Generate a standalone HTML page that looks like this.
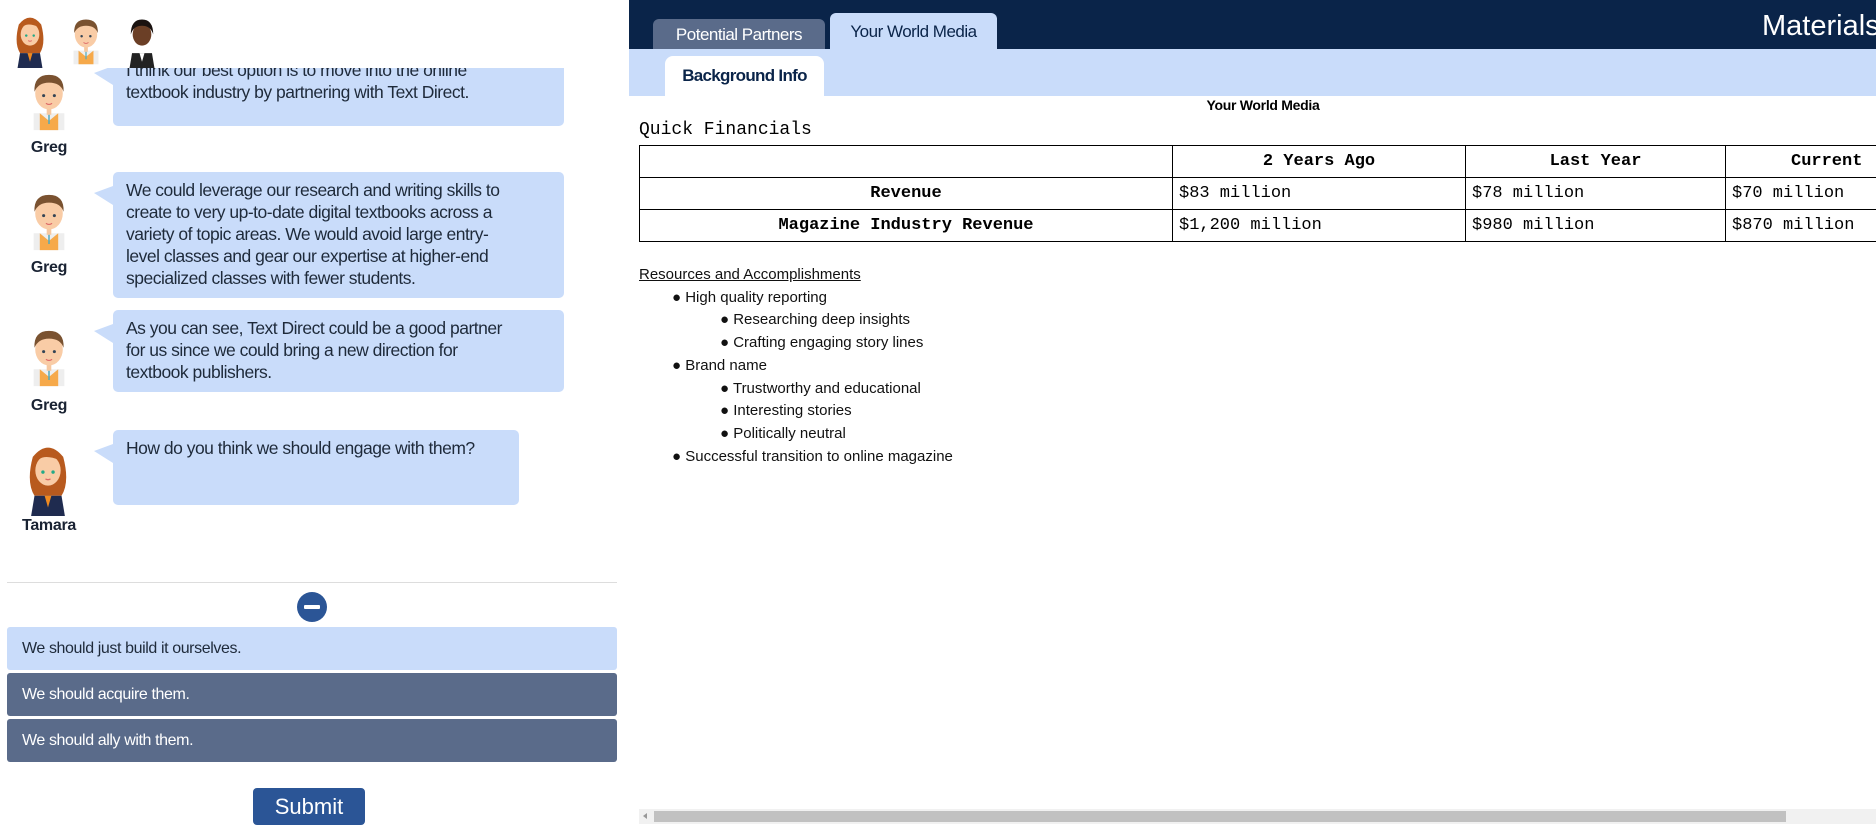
<!DOCTYPE html>
<html><head><meta charset="utf-8"><style>
*{margin:0;padding:0;box-sizing:border-box}
body{width:1876px;height:829px;overflow:hidden;background:#fff;font-family:"Liberation Sans",sans-serif;position:relative}
.a{position:absolute}
.bub{position:absolute;background:#c9dcfa;border-radius:5px;color:#1e2a3a;font-size:17.5px;line-height:22px;padding:7px 13px;letter-spacing:-0.5px;white-space:nowrap}
.bub:before{content:"";position:absolute;left:-19px;top:14px;border-right:19px solid #c9dcfa;border-top:7px solid transparent;border-bottom:12px solid transparent}
.name{position:absolute;font-weight:bold;font-size:16px;color:#1a2333;width:70px;text-align:center;letter-spacing:-0.3px}
.opt{position:absolute;left:7px;width:610px;height:43px;border-radius:3px;font-size:16px;line-height:43px;padding-left:15px;letter-spacing:-0.4px}
.mono{font-family:"Liberation Mono",monospace}
table{border-collapse:collapse}
td{border:1px solid #000;height:32px;font-family:"Liberation Mono",monospace;font-size:17px;padding:0 6px}
.li{position:absolute;font-size:15px;color:#111}
</style></head><body>
<svg width="0" height="0" style="position:absolute"><defs>
<g id="greg"><rect x="10" y="62" width="40" height="22" fill="#eee"/><path d="M18 62 L30 72 L42 62 L42 84 L18 84Z" fill="#f6a94a"/><rect x="27" y="54" width="6" height="10" fill="#f6c8a0"/><ellipse cx="30" cy="36" rx="18" ry="21" fill="#f9cca6"/><path d="M11 34 Q10 12 30 12 Q50 12 49 34 Q45 22 30 22 Q16 22 11 34Z" fill="#7a5230"/><circle cx="23" cy="39" r="2" fill="#345"/><circle cx="37" cy="39" r="2" fill="#345"/><path d="M26 49 Q30 52 34 49" stroke="#d66" stroke-width="1.5" fill="none"/><path d="M29 64 L31 64 L31 76 L29 76Z" fill="#5ab"/></g>
<g id="tam"><path d="M12 20 Q30 -2 48 20 Q56 50 46 66 L14 66 Q4 50 12 20Z" fill="#b85a1e"/><path d="M10 90 L14 66 L46 66 L50 90Z" fill="#1f2b4f"/><path d="M26 66 L30 80 L34 66Z" fill="#f08a20"/><ellipse cx="30" cy="36" rx="15" ry="18" fill="#f9cca6"/><path d="M15 30 Q20 14 44 24 Q40 18 30 17 Q18 18 15 30Z" fill="#b85a1e"/><circle cx="24" cy="38" r="2" fill="#2a8"/><circle cx="36" cy="38" r="2" fill="#2a8"/><path d="M27 46 Q30 48 33 46" stroke="#d66" stroke-width="1.5" fill="none"/></g>
<g id="wom"><path d="M10 90 L14 66 L46 66 L50 90Z" fill="#222"/><path d="M26 66 L30 80 L34 66Z" fill="#fff"/><ellipse cx="30" cy="36" rx="15" ry="18" fill="#6b3f26"/><path d="M12 36 Q12 12 30 12 Q48 12 48 36 Q44 22 30 22 Q16 22 12 36Z" fill="#1a1210"/></g>
</defs></svg>
<svg class="a" style="left:10px;top:12px" width="40" height="56" viewBox="0 0 60 90"><use href="#tam"/></svg>
<svg class="a" style="left:66px;top:12px" width="40" height="56" viewBox="0 0 60 90"><use href="#greg"/></svg>
<svg class="a" style="left:122px;top:12px" width="40" height="56" viewBox="0 0 60 90"><use href="#wom"/></svg>
<div class="a" style="left:0;top:68px;width:629px;height:500px;overflow:hidden">
<div class="a" style="left:0;top:-68px;width:629px;height:600px">
<svg class="a" style="left:26px;top:62px" width="46" height="78" viewBox="0 6 60 80"><use href="#greg"/></svg>
<div class="name" style="left:14px;top:139px">Greg</div>
<div class="bub" style="left:113px;top:52px;width:451px;height:74px">I think our best option is to move into the online<br>textbook industry by partnering with Text Direct.</div>
<svg class="a" style="left:26px;top:182px" width="46" height="78" viewBox="0 6 60 80"><use href="#greg"/></svg>
<div class="name" style="left:14px;top:259px">Greg</div>
<div class="bub" style="left:113px;top:172px;width:451px;height:126px;padding-top:7px">We could leverage our research and writing skills to<br>create to very up-to-date digital textbooks across a<br>variety of topic areas. We would avoid large entry-<br>level classes and gear our expertise at higher-end<br>specialized classes with fewer students.</div>
<svg class="a" style="left:26px;top:318px" width="46" height="78" viewBox="0 6 60 80"><use href="#greg"/></svg>
<div class="name" style="left:14px;top:397px">Greg</div>
<div class="bub" style="left:113px;top:310px;width:451px;height:82px">As you can see, Text Direct could be a good partner<br>for us since we could bring a new direction for<br>textbook publishers.</div>
<svg class="a" style="left:20px;top:440px" width="56" height="76" viewBox="0 0 60 90"><use href="#tam"/></svg>
<div class="name" style="left:14px;top:517px">Tamara</div>
<div class="bub" style="left:113px;top:430px;width:406px;height:75px">How do you think we should engage with them?</div>
</div></div>
<div class="a" style="left:7px;top:582px;width:610px;height:1px;background:#ddd"></div>
<div class="a" style="left:297px;top:592px;width:30px;height:30px;border-radius:50%;background:#2b5596"><div class="a" style="left:7px;top:13px;width:16px;height:4px;background:#fff;border-radius:1px"></div></div>
<div class="opt" style="top:627px;background:#c9dcfa;color:#1e2a3a">We should just build it ourselves.</div>
<div class="opt" style="top:673px;background:#5a6b8a;color:#fff">We should acquire them.</div>
<div class="opt" style="top:719px;background:#5a6b8a;color:#fff">We should ally with them.</div>
<div class="a" style="left:253px;top:788px;width:112px;height:37px;background:#2b5596;border-radius:4px;color:#fff;font-size:22px;text-align:center;line-height:37px">Submit</div>
<div class="a" style="left:629px;top:0;width:1247px;height:49px;background:#0a2449"></div>
<div class="a" style="left:653px;top:19px;width:172px;height:30px;background:#5a6b8a;border-radius:6px 6px 0 0;color:#fff;font-size:17px;text-align:center;line-height:32px;letter-spacing:-0.5px">Potential Partners</div>
<div class="a" style="left:830px;top:13px;width:167px;height:36px;background:#c9dcfa;border-radius:6px 6px 0 0;color:#0a2449;font-size:17px;text-align:center;line-height:38px;letter-spacing:-0.5px">Your World Media</div>
<div class="a" style="left:1762px;top:10px;color:#fff;font-size:29px">Materials</div>
<div class="a" style="left:629px;top:49px;width:1247px;height:47px;background:#c9dcfa"></div>
<div class="a" style="left:665px;top:56px;width:159px;height:40px;background:#fff;border-radius:8px 8px 0 0;color:#0a2449;font-size:17px;font-weight:bold;text-align:center;line-height:40px;letter-spacing:-0.7px">Background Info</div>
<div class="a" style="left:1163px;top:97px;width:200px;text-align:center;font-weight:bold;font-size:14px;letter-spacing:-0.3px">Your World Media</div>
<div class="a mono" style="left:639px;top:120px;font-size:18px">Quick Financials</div>
<table class="a" style="left:639px;top:145px;width:1260px">
<tr><td style="width:533px"></td><td style="width:293px;text-align:center;font-weight:bold">2 Years Ago</td><td style="width:260px;text-align:center;font-weight:bold">Last Year</td><td style="text-align:left;padding-left:65px;font-weight:bold">Current</td></tr>
<tr><td style="text-align:center;font-weight:bold">Revenue</td><td>$83 million</td><td>$78 million</td><td>$70 million</td></tr>
<tr><td style="text-align:center;font-weight:bold">Magazine Industry Revenue</td><td>$1,200 million</td><td>$980 million</td><td>$870 million</td></tr>
</table>
<div class="li" style="left:639px;top:266px;text-decoration:underline">Resources and Accomplishments</div>
<div class="li" style="left:672px;top:289px">● High quality reporting</div>
<div class="li" style="left:720px;top:311px">● Researching deep insights</div>
<div class="li" style="left:720px;top:334px">● Crafting engaging story lines</div>
<div class="li" style="left:672px;top:357px">● Brand name</div>
<div class="li" style="left:720px;top:380px">● Trustworthy and educational</div>
<div class="li" style="left:720px;top:402px">● Interesting stories</div>
<div class="li" style="left:720px;top:425px">● Politically neutral</div>
<div class="li" style="left:672px;top:448px">● Successful transition to online magazine</div>
<div class="a" style="left:639px;top:809px;width:1237px;height:15px;background:#f1f1f1"></div>
<div class="a" style="left:654px;top:811px;width:1132px;height:11px;background:#c1c1c1"></div>
<div class="a" style="left:643px;top:813px;border-right:4px solid #999;border-top:3px solid transparent;border-bottom:3px solid transparent"></div>
</body></html>
